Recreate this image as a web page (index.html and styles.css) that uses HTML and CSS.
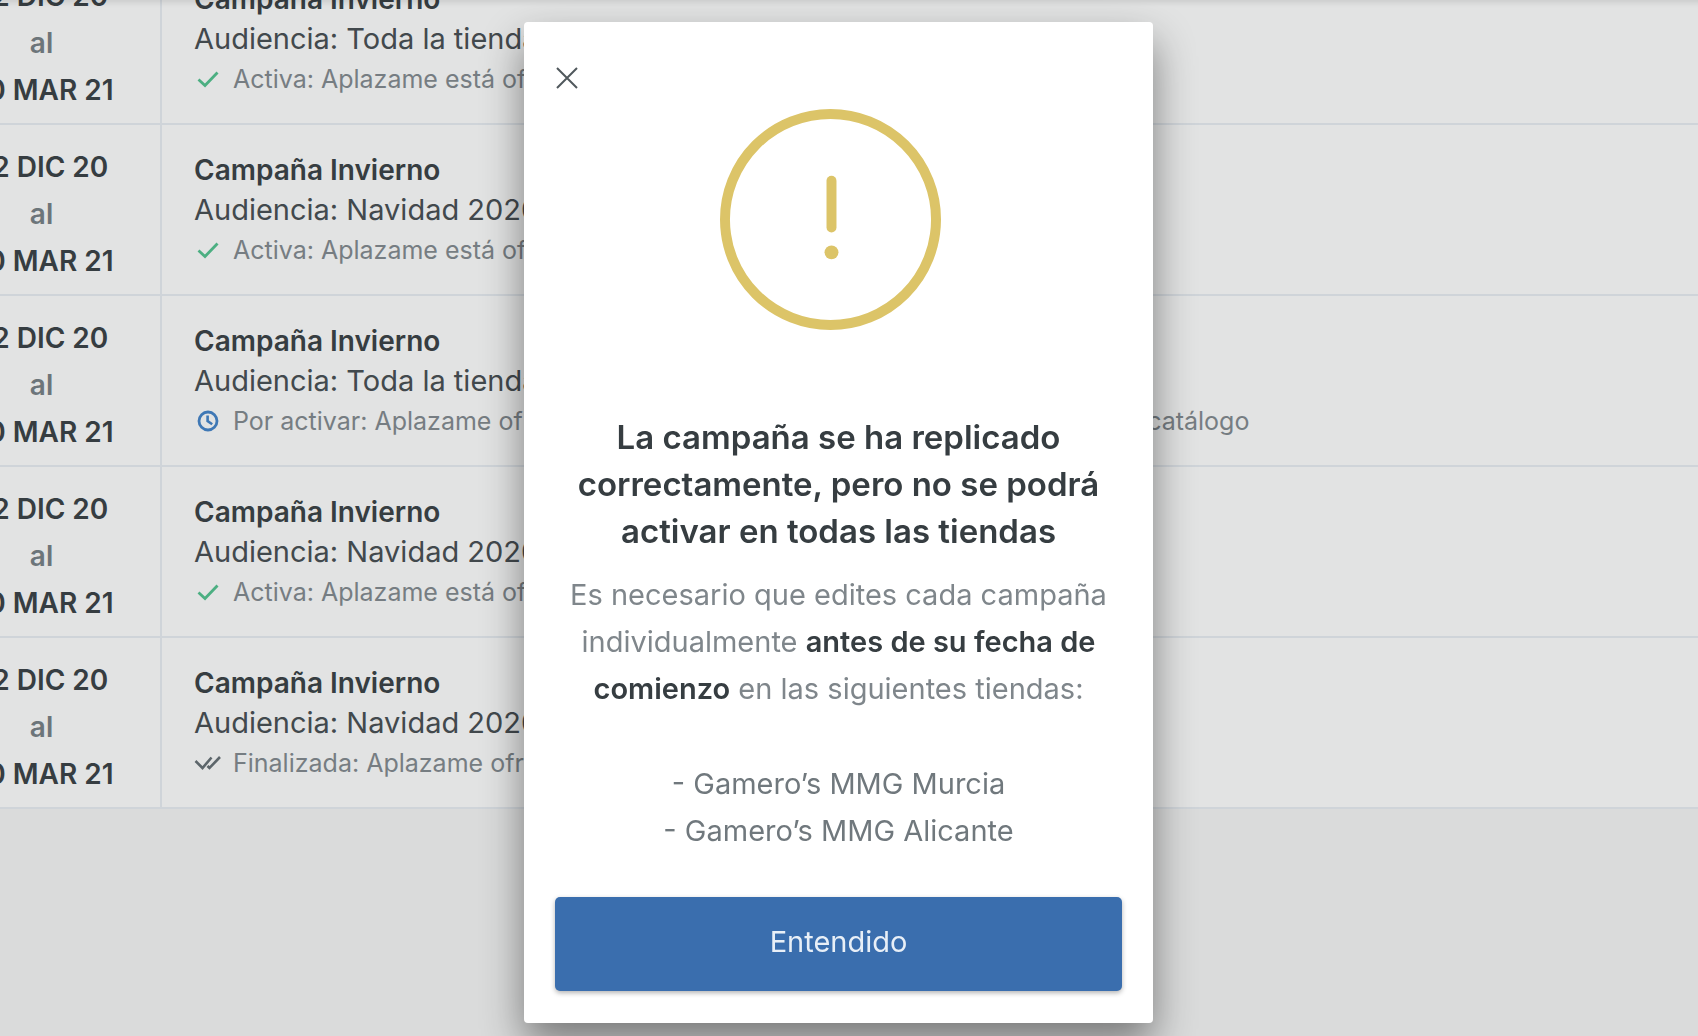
FILE: index.html
```
<!DOCTYPE html>
<html lang="es">
<head>
    <meta charset="UTF-8" />
    <meta name="viewport" content="width=device-width, initial-scale=1">
    <title>Campañas</title>
    <link rel="stylesheet" href="styles.css">
</head>
<body>

<svg class="sprite" aria-hidden="true">
    <symbol id="icon-check" viewBox="0 0 24 24">
        <path d="M2.5 12.5 9 18.5 21.5 5.5" fill="none" stroke="currentColor" stroke-width="2.8"/>
    </symbol>
    <symbol id="icon-clock" viewBox="0 0 24 24">
        <circle cx="12" cy="12" r="9" fill="none" stroke="currentColor" stroke-width="2.8"/>
        <path d="M11.6 6.5V12l4.6 3.2" fill="none" stroke="currentColor" stroke-width="2.6"/>
    </symbol>
    <symbol id="icon-double-check" viewBox="0 0 28 24">
        <path d="M1.5 10 8.5 17 17.5 6.5M13.5 15 15.5 17 26 6" fill="none" stroke="currentColor" stroke-width="2.6"/>
    </symbol>
</svg>

<ul class="campaigns">
    <li class="campaign">
        <div class="dates"><span>22 DIC 20</span><span class="to">al</span><span>30 MAR 21</span></div>
        <div class="info">
            <h2 class="name">Campaña Invierno</h2>
            <p class="audience">Audiencia: Toda la tienda</p>
            <p class="status active"><svg class="icon"><use href="#icon-check"/></svg>Activa: Aplazame está ofreciendo esta campaña</p>
        </div>
    </li>
    <li class="campaign">
        <div class="dates"><span>22 DIC 20</span><span class="to">al</span><span>30 MAR 21</span></div>
        <div class="info">
            <h2 class="name">Campaña Invierno</h2>
            <p class="audience">Audiencia: Navidad 2020</p>
            <p class="status active"><svg class="icon"><use href="#icon-check"/></svg>Activa: Aplazame está ofreciendo esta campaña</p>
        </div>
    </li>
    <li class="campaign">
        <div class="dates"><span>22 DIC 20</span><span class="to">al</span><span>30 MAR 21</span></div>
        <div class="info">
            <h2 class="name">Campaña Invierno</h2>
            <p class="audience">Audiencia: Toda la tienda</p>
            <p class="status pending"><svg class="icon"><use href="#icon-clock"/></svg>Por activar: Aplazame ofrecerá esta campaña para todos los productos de tu catálogo</p>
        </div>
    </li>
    <li class="campaign">
        <div class="dates"><span>22 DIC 20</span><span class="to">al</span><span>30 MAR 21</span></div>
        <div class="info">
            <h2 class="name">Campaña Invierno</h2>
            <p class="audience">Audiencia: Navidad 2020</p>
            <p class="status active"><svg class="icon"><use href="#icon-check"/></svg>Activa: Aplazame está ofreciendo esta campaña</p>
        </div>
    </li>
    <li class="campaign">
        <div class="dates"><span>22 DIC 20</span><span class="to">al</span><span>30 MAR 21</span></div>
        <div class="info">
            <h2 class="name">Campaña Invierno</h2>
            <p class="audience">Audiencia: Navidad 2020</p>
            <p class="status finished"><svg class="icon"><use href="#icon-double-check"/></svg>Finalizada: Aplazame ofreció esta campaña</p>
        </div>
    </li>
</ul>

<div class="backdrop">
    <div class="modal" role="dialog" aria-modal="true" aria-labelledby="modal-title">
        <button class="close" type="button" aria-label="Cerrar">
            <svg viewBox="0 0 22 22"><path d="M1 1 21 21M21 1 1 21" fill="none" stroke="currentColor" stroke-width="2"/></svg>
        </button>
        <svg class="warning" viewBox="0 0 222 222" aria-hidden="true">
            <circle cx="111" cy="111" r="106" fill="none" stroke="currentColor" stroke-width="10"/>
            <path d="M112 72V119" fill="none" stroke="currentColor" stroke-width="10" stroke-linecap="round"/>
            <circle cx="112" cy="144" r="7" fill="currentColor"/>
        </svg>
        <h1 class="title" id="modal-title">La campaña se ha replicado<br>correctamente, pero no se podrá<br>activar en todas las tiendas</h1>
        <p class="text">Es necesario que edites cada campaña<br>individualmente <strong>antes de su fecha de<br>comienzo</strong> en las siguientes tiendas:</p>
        <ul class="stores">
            <li>- Gamero’s MMG Murcia</li>
            <li>- Gamero’s MMG Alicante</li>
        </ul>
        <button class="accept" type="button">Entendido</button>
    </div>
</div>

</body>
</html>
```
FILE: styles.css
```
* {
    box-sizing: border-box;
}
body {
    margin: 0;
    min-height: 100vh;
    overflow: hidden;
    background: #dadbdb;
    color: #363d41;
    font-family: Inter, "Liberation Sans", sans-serif;
    font-size: 28px;
}
h1, h2, p, ul {
    margin: 0;
    padding: 0;
    font-size: inherit;
}
ul {
    list-style: none;
}
.sprite {
    display: none;
}

/* list is scrolled part way, both down and to the right */
.campaigns {
    margin: -46px 0 0 -77px;
}
.campaign {
    display: flex;
    background: #e2e3e3;
    border-bottom: 2px solid #cfd4d9;
}
.dates {
    display: flex;
    flex-direction: column;
    width: 239px;
    padding: 19px 0 9px;
    border-right: 2px solid #cfd4d9;
    font-weight: 600;
    line-height: 47px;
    text-align: center;
}
.dates .to {
    color: #6c757a;
}
.info {
    padding: 25px 0 0 32px;
    line-height: 40px;
    white-space: nowrap;
}
.name {
    font-weight: 600;
}
.audience {
    color: #42494d;
    font-size: 29px;
}
.status {
    display: flex;
    align-items: center;
    gap: 11px;
    color: #767d82;
    font-size: 25px;
}
.icon {
    width: 28px;
    height: 24px;
}
.active .icon {
    color: #4caf82;
}
.pending .icon {
    color: #3f78b5;
}
.finished .icon {
    color: #5d666b;
}

.backdrop {
    position: fixed;
    inset: 0;
    display: flex;
    justify-content: center;
    align-items: flex-start;
    padding: 22px 21px 14px 0;
    box-shadow: inset 0 8px 6px -6px rgba(0, 0, 0, .12);
}
.modal {
    display: flex;
    flex-direction: column;
    width: 629px;
    padding: 44px 31px 32px;
    background: #fff;
    border-radius: 4px;
    box-shadow: 0 20px 42px rgba(0, 0, 0, .45);
    text-align: center;
    line-height: 47px;
}
.close {
    width: 24px;
    height: 24px;
    padding: 1px;
    border: 0;
    background: none;
    color: #50585c;
    cursor: pointer;
}
.close svg {
    display: block;
}
.warning {
    align-self: center;
    width: 221px;
    height: 221px;
    margin: 19px 16px 0 0;
    color: #dcc468;
}
.title {
    margin-top: 84px;
    font-size: 33px;
    font-weight: 600;
}
.text {
    margin-top: 16px;
    color: #7f868b;
    font-size: 29px;
}
.text strong {
    color: #363d41;
    font-weight: 600;
}
.stores {
    margin-top: 48px;
    color: #70787d;
    font-size: 29px;
}
.accept {
    height: 94px;
    margin-top: 43px;
    padding: 0 0 6px;
    border: 0;
    border-radius: 5px;
    background: #3a6eae;
    box-shadow: 0 2px 5px rgba(0, 0, 0, .3);
    color: #e8eff7;
    font: inherit;
    font-size: 29px;
    cursor: pointer;
}
```
